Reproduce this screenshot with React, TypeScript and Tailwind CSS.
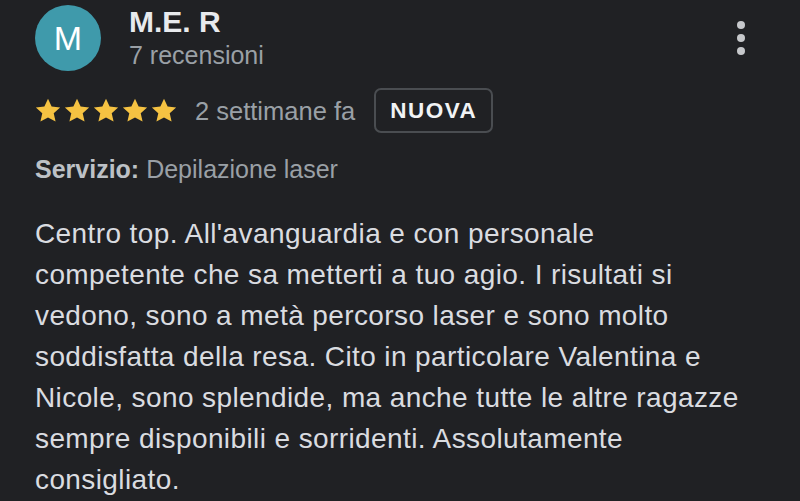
const lines = [
  "Centro top. All'avanguardia e con personale",
  'competente che sa metterti a tuo agio. I risultati si',
  'vedono, sono a metà percorso laser e sono molto',
  'soddisfatta della resa. Cito in particolare Valentina e',
  'Nicole, sono splendide, ma anche tutte le altre ragazze',
  'sempre disponibili e sorridenti. Assolutamente',
  'consigliato.',
];

export default function App() {
  return (
    <div
      className="w-[800px] h-[501px] overflow-hidden bg-[#202124] text-[#e8eaed]"
      style={{ fontFamily: '"Liberation Sans", Arial, sans-serif' }}
    >
      <div className="flex items-start pl-[35px] pr-[55px] pt-[5px]">
        <div className="w-[66px] h-[66px] rounded-full bg-[#3f9aab] flex items-center justify-center text-white text-[34px] leading-none">
          M
        </div>
        <div className="ml-[28px] flex-1">
          <div className="text-[30px] font-bold leading-[34px] text-[#e8eaed]">M.E. R</div>
          <div className="text-[25px] leading-[30px] mt-[1px] text-[#9aa0a6]">7 recensioni</div>
        </div>
        <div className="flex flex-col gap-[5px] pt-[16px]">
          <span className="w-[8px] h-[8px] rounded-full bg-[#c6c8cb]" />
          <span className="w-[8px] h-[8px] rounded-full bg-[#c6c8cb]" />
          <span className="w-[8px] h-[8px] rounded-full bg-[#c6c8cb]" />
        </div>
      </div>

      <div className="flex items-center pl-[34px] mt-[17px]">
        <div className="flex gap-[1px]">
          {[0, 1, 2, 3, 4].map((i) => (
            <svg key={i} width="28" height="28" viewBox="0 0 24 24">
              <path
                d="M12 1.5l3.1 6.7 7.3.8-5.5 4.9 1.6 7.2L12 17.5l-6.5 3.6 1.6-7.2L1.6 9l7.3-.8z"
                fill="#f5c242"
              />
            </svg>
          ))}
        </div>
        <span className="ml-[17px] text-[25.5px] leading-[30px] text-[#9aa0a6]">2 settimane fa</span>
        <span className="ml-[19px] h-[45px] px-[14px] flex items-center border-2 border-[#4a4d51] rounded-[7px] text-[22.5px] font-bold tracking-[1.5px] text-[#f1f3f4]">
          NUOVA
        </span>
      </div>

      <div className="pl-[35px] mt-[21px] text-[25px] leading-[30px] whitespace-nowrap">
        <span className="font-bold text-[#bdc1c6]">Servizio:</span>{' '}
        <span className="text-[#9aa0a6]">Depilazione laser</span>
      </div>

      <p className="pl-[35px] mt-[29px] text-[28px] leading-[41px] tracking-[0.4px] text-[#dadce0] whitespace-nowrap">
        {lines.map((l, i) => (
          <span key={i} className="block">
            {l}
          </span>
        ))}
      </p>
    </div>
  );
}
